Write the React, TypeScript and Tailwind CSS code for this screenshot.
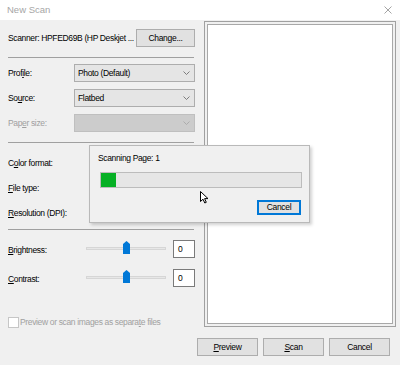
import React from "react";

const font = { fontFamily: '"Liberation Sans", Arial, sans-serif' };

function U({ children }: { children: string }) {
  return <span className="underline underline-offset-[1px] decoration-[1px]">{children}</span>;
}

function Combo({ value, disabled }: { value?: string; disabled?: boolean }) {
  return (
    <div
      className={
        "ml-auto w-[121px] h-[18px] border flex items-center pl-[3px] pr-[4px] " +
        (disabled ? "bg-[#cccccc] border-[#bfbfbf]" : "bg-[#e5e5e5] border-[#adadad]")
      }
    >
      <span className="text-black leading-none">{value}</span>
      <svg className="ml-auto" width="7" height="4" viewBox="0 0 7 4">
        <path d="M0.5 0.5 L3.5 3.5 L6.5 0.5" fill="none" stroke={disabled ? "#a8a8a8" : "#707070"} strokeWidth="0.9" />
      </svg>
    </div>
  );
}

function Sep() {
  return <div className="h-px bg-[#a0a0a0] w-[186px]" />;
}

function Slider() {
  return (
    <div className="relative w-[80px] h-[12px] ml-[78px]">
      <div className="absolute left-0 right-0 top-[4px] h-[3px] bg-[#e7e7e7] border border-[#d6d6d6]" />
      <svg className="absolute left-[37px] top-[-2px]" width="7" height="13" viewBox="0 0 7 13">
        <path d="M3.5 0 L7 3 L7 13 L0 13 L0 3 Z" fill="#0078d7" />
      </svg>
    </div>
  );
}

function NumBox() {
  return (
    <div className="ml-auto w-[22px] h-[18px] bg-white border border-[#7a7a7a] flex items-center pl-[4px] leading-none">
      0
    </div>
  );
}

function Btn({
  children,
  w = "w-[61px]",
  h = "h-[18px]",
  focus,
}: {
  children: React.ReactNode;
  w?: string;
  h?: string;
  focus?: boolean;
}) {
  return (
    <div
      className={
        w +
        " " +
        h +
        " flex items-center justify-center text-[8.5px] tracking-[-0.3px] leading-none text-black bg-[#e1e1e1] " +
        (focus ? "border-2 border-[#0078d7]" : "border border-[#adadad]")
      }
    >
      {children}
    </div>
  );
}

export default function App() {
  return (
    <div
      className="relative w-[400px] h-[365px] overflow-hidden bg-[#f0f0f0] text-black text-[8.5px] tracking-[-0.35px]"
      style={font}
    >
      {/* title bar */}
      <div className="h-[20px] bg-white flex items-center px-[7px]">
        <span className="text-[9.5px] tracking-normal text-[#a6a6a6]">New Scan</span>
        <svg className="ml-auto mr-[1px]" width="8" height="8" viewBox="0 0 8 8">
          <path d="M0.5 0.5 L7.5 7.5 M7.5 0.5 L0.5 7.5" stroke="#9a9a9a" strokeWidth="0.9" />
        </svg>
      </div>

      <div className="flex">
        {/* left panel */}
        <div className="w-[204px] pl-[8px] pr-[9px] flex flex-col">
          <div className="mt-[9px] h-[18px] flex items-center">
            <span className="whitespace-nowrap">Scanner: HPFED69B (HP Deskjet ...</span>
            <div className="ml-auto">
              <Btn w="w-[59px]">
                Chan<U>g</U>e...
              </Btn>
            </div>
          </div>
          <div className="mt-[10px]">
            <Sep />
          </div>

          <div className="mt-[6px] h-[18px] flex items-center">
            <span>
              Prof<U>i</U>le:
            </span>
            <Combo value="Photo (Default)" />
          </div>
          <div className="mt-[7px] h-[18px] flex items-center">
            <span>
              So<U>u</U>rce:
            </span>
            <Combo value="Flatbed" />
          </div>
          <div className="mt-[7px] h-[18px] flex items-center">
            <span className="text-[#a0a0a0]">
              Pap<U>e</U>r size:
            </span>
            <Combo disabled />
          </div>
          <div className="mt-[10px]">
            <Sep />
          </div>

          <div className="mt-[8px] h-[25px] flex items-center">
            <span>
              C<U>o</U>lor format:
            </span>
          </div>
          <div className="h-[25px] flex items-center">
            <span>
              <U>F</U>ile type:
            </span>
          </div>
          <div className="h-[25px] flex items-center">
            <span>
              <U>R</U>esolution (DPI):
            </span>
          </div>
          <div className="mt-[3px]">
            <Sep />
          </div>

          <div className="mt-[10px] h-[18px] flex items-center relative">
            <span className="absolute left-0 top-[6px] leading-none">
              <U>B</U>rightness:
            </span>
            <Slider />
            <NumBox />
          </div>
          <div className="mt-[11px] h-[18px] flex items-center relative">
            <span className="absolute left-0 top-[6px] leading-none">
              <U>C</U>ontrast:
            </span>
            <Slider />
            <NumBox />
          </div>

          <div className="mt-[29px] flex items-center">
            <div className="w-[11px] h-[11px] bg-white border border-[#c6c6c6]" />
            <span className="ml-[1px] text-[#a0a0a0] whitespace-nowrap">
              Preview or scan images as separa<U>t</U>e files
            </span>
          </div>
        </div>

        {/* preview area */}
        <div className="flex flex-col">
          <div className="mt-px w-[192px] h-[306px] border border-[#a0a0a0] p-[2px] bg-[#f0f0f0]">
            <div className="w-full h-full bg-white border border-[#a8a8a8]" />
          </div>
        </div>
      </div>

      {/* bottom buttons */}
      <div className="absolute right-[10px] top-[338px] flex gap-[5px]">
        <Btn>
          <U>P</U>review
        </Btn>
        <Btn>
          <U>S</U>can
        </Btn>
        <Btn>Cancel</Btn>
      </div>

      {/* progress dialog */}
      <div className="absolute left-[89px] top-[145px] w-[221px] h-[78px] bg-[#f0f0f0] border border-[#b9b9b9] shadow-[2px_2px_3px_rgba(0,0,0,0.18)]">
        <div className="ml-[8px] mt-[7px] leading-[11px]">Scanning Page: 1</div>
        <div className="ml-[10px] mt-[8px] w-[202px] h-[16px] bg-[#e6e6e6] border border-[#bcbcbc] flex">
          <div className="w-[15px] h-full bg-[#06b025]" />
        </div>
        <div className="flex justify-end mr-[8px] mt-[12px]">
          <Btn w="w-[44px]" h="h-[15px]" focus>
            Cancel
          </Btn>
        </div>
        <svg className="absolute left-[110px] top-[45px]" width="9" height="13" viewBox="0 0 9 13">
          <path d="M0.5 0.5 L0.5 10.5 L3 8.2 L4.8 12 L6.3 11.3 L4.6 7.6 L8 7.6 Z" fill="white" stroke="black" strokeWidth="1" strokeLinejoin="round" />
        </svg>
      </div>
    </div>
  );
}
